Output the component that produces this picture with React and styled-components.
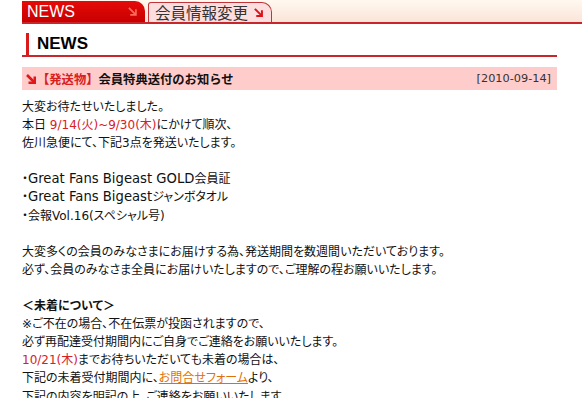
import React from "react";
import styled, { createGlobalStyle } from "styled-components";

const Global = createGlobalStyle`
  html, body { margin: 0; padding: 0; background: #fff; }
  body {
    font-family: "DejaVu Sans", "Noto Sans CJK JP", sans-serif;
    color: #111;
    overflow: hidden;
  }
`;

const Page = styled.div`
  padding-left: 22px;
`;

const TabBar = styled.div`
  display: flex;
  align-items: flex-end;
  gap: 3px;
  height: 22px;
  background: linear-gradient(#fff9f0, #fbe4d8);
  border-bottom: 2px solid #c8262b;
`;

const Tab = styled.div`
  box-sizing: border-box;
  display: flex;
  align-items: center;
  justify-content: space-between;
  width: ${(p) => p.$w}px;
  height: ${(p) => (p.$active ? 21 : 20)}px;
  padding: 0 8px 0 ${(p) => (p.$active ? 5 : 6)}px;
  border-radius: ${(p) => (p.$active ? "0 10px 0 0" : "3px 10px 0 0")};
  background: ${(p) =>
    p.$active ? "linear-gradient(#e60a0a, #c80000)" : "#fddede"};
  border: ${(p) => (p.$active ? "none" : "1px solid #c3333a")};
  border-bottom: none;
  color: ${(p) => (p.$active ? "#fff" : "#333")};
  font-family: ${(p) =>
    p.$active
      ? '"Liberation Sans", Arial, sans-serif'
      : '"Noto Sans CJK JP", sans-serif'};
  font-size: ${(p) => (p.$active ? 16 : 15.5)}px;
  line-height: 1;
`;

const Arrow = ({ color, size = 10, w = 2.4 }) => (
  <svg width={size} height={size} viewBox="0 0 10 10">
    <path d="M1 1 L8.5 8.5" stroke={color} strokeWidth={w} fill="none" />
    <path d="M2.5 8.8 H8.8 V2.5" stroke={color} strokeWidth={w} fill="none" />
  </svg>
);

const Content = styled.div`
  width: 535px;
`;

const Heading = styled.h2`
  margin: 9px 0 0;
  padding: 0 0 0 4px;
  border-bottom: 2px solid #c8262b;
  font: bold 17px "Liberation Sans", Arial, sans-serif;
`;

const HeadingInner = styled.span`
  display: block;
  height: 22px;
  line-height: 22px;
  border-left: 3px solid #d81a1a;
  padding-left: 8px;
  color: #000;
`;

const TitleBar = styled.div`
  margin-top: 10px;
  height: 23px;
  background: #ffcccc;
  display: flex;
  align-items: center;
  padding: 0 6px 0 4px;
  gap: 1px;
`;

const Title = styled.span`
  font-family: "Noto Sans CJK JP", sans-serif;
  font-weight: bold;
  font-size: 12.3px;
  color: #111;
  flex: 1;
`;

const Red = styled.span`
  color: #d8201f;
`;

const DateText = styled.span`
  font-family: "DejaVu Sans", Verdana, sans-serif;
  font-size: 11.3px;
  color: #333;
`;

const Body = styled.div`
  margin-top: 8px;
  font-family: "DejaVu Sans", "Noto Sans CJK JP", sans-serif;
  font-feature-settings: "palt";
  font-size: 12px;
  line-height: 18.1px;
  color: #111;
  white-space: nowrap;
`;

const Line = styled.div`
  height: 18.1px;
  font-weight: ${(p) => (p.$bold ? "bold" : "normal")};
`;

const Latin = styled.span`
  font-size: 13.2px;
`;

const Link = styled.a`
  color: #e0700a;
  text-decoration: underline;
`;

export default function App() {
  return (
    <>
      <Global />
      <Page>
        <TabBar>
          <Tab $active $w={123}>
            <span>NEWS</span>
            <Arrow color="#ff6a5a" size={9} w={1.8} />
          </Tab>
          <Tab $w={124}>
            <span>会員情報変更</span>
            <Arrow color="#e0101a" size={9} w={2.2} />
          </Tab>
        </TabBar>
        <Content>
          <Heading>
            <HeadingInner>NEWS</HeadingInner>
          </Heading>
          <TitleBar>
            <Arrow color="#e0181a" size={10} w={2.6} />
            <Title>
              <Red>【発送物】</Red>会員特典送付のお知らせ
            </Title>
            <DateText>[2010-09-14]</DateText>
          </TitleBar>
          <Body>
            <Line>大変お待たせいたしました。</Line>
            <Line>
              本日 <Red>9/14(火)~9/30(木)</Red>にかけて順次、
            </Line>
            <Line>佐川急便にて、下記3点を発送いたします。</Line>
            <Line />
            <Line>
              ・<Latin>Great Fans Bigeast GOLD</Latin>会員証
            </Line>
            <Line>
              ・<Latin>Great Fans Bigeast</Latin>ジャンボタオル
            </Line>
            <Line>・会報Vol.16(スペシャル号)</Line>
            <Line />
            <Line>
              大変多くの会員のみなさまにお届けする為、発送期間を数週間いただいております。
            </Line>
            <Line>
              必ず、会員のみなさま全員にお届けいたしますので、ご理解の程お願いいたします。
            </Line>
            <Line />
            <Line $bold>＜未着について＞</Line>
            <Line>※ご不在の場合、不在伝票が投函されますので、</Line>
            <Line>必ず再配達受付期間内にご自身でご連絡をお願いいたします。</Line>
            <Line>
              <Red>10/21(木)</Red>までお待ちいただいても未着の場合は、
            </Line>
            <Line>
              下記の未着受付期間内に、<Link href="#">お問合せフォーム</Link>より、
            </Line>
            <Line>下記の内容を明記の上、ご連絡をお願いいたします。</Line>
          </Body>
        </Content>
      </Page>
    </>
  );
}
